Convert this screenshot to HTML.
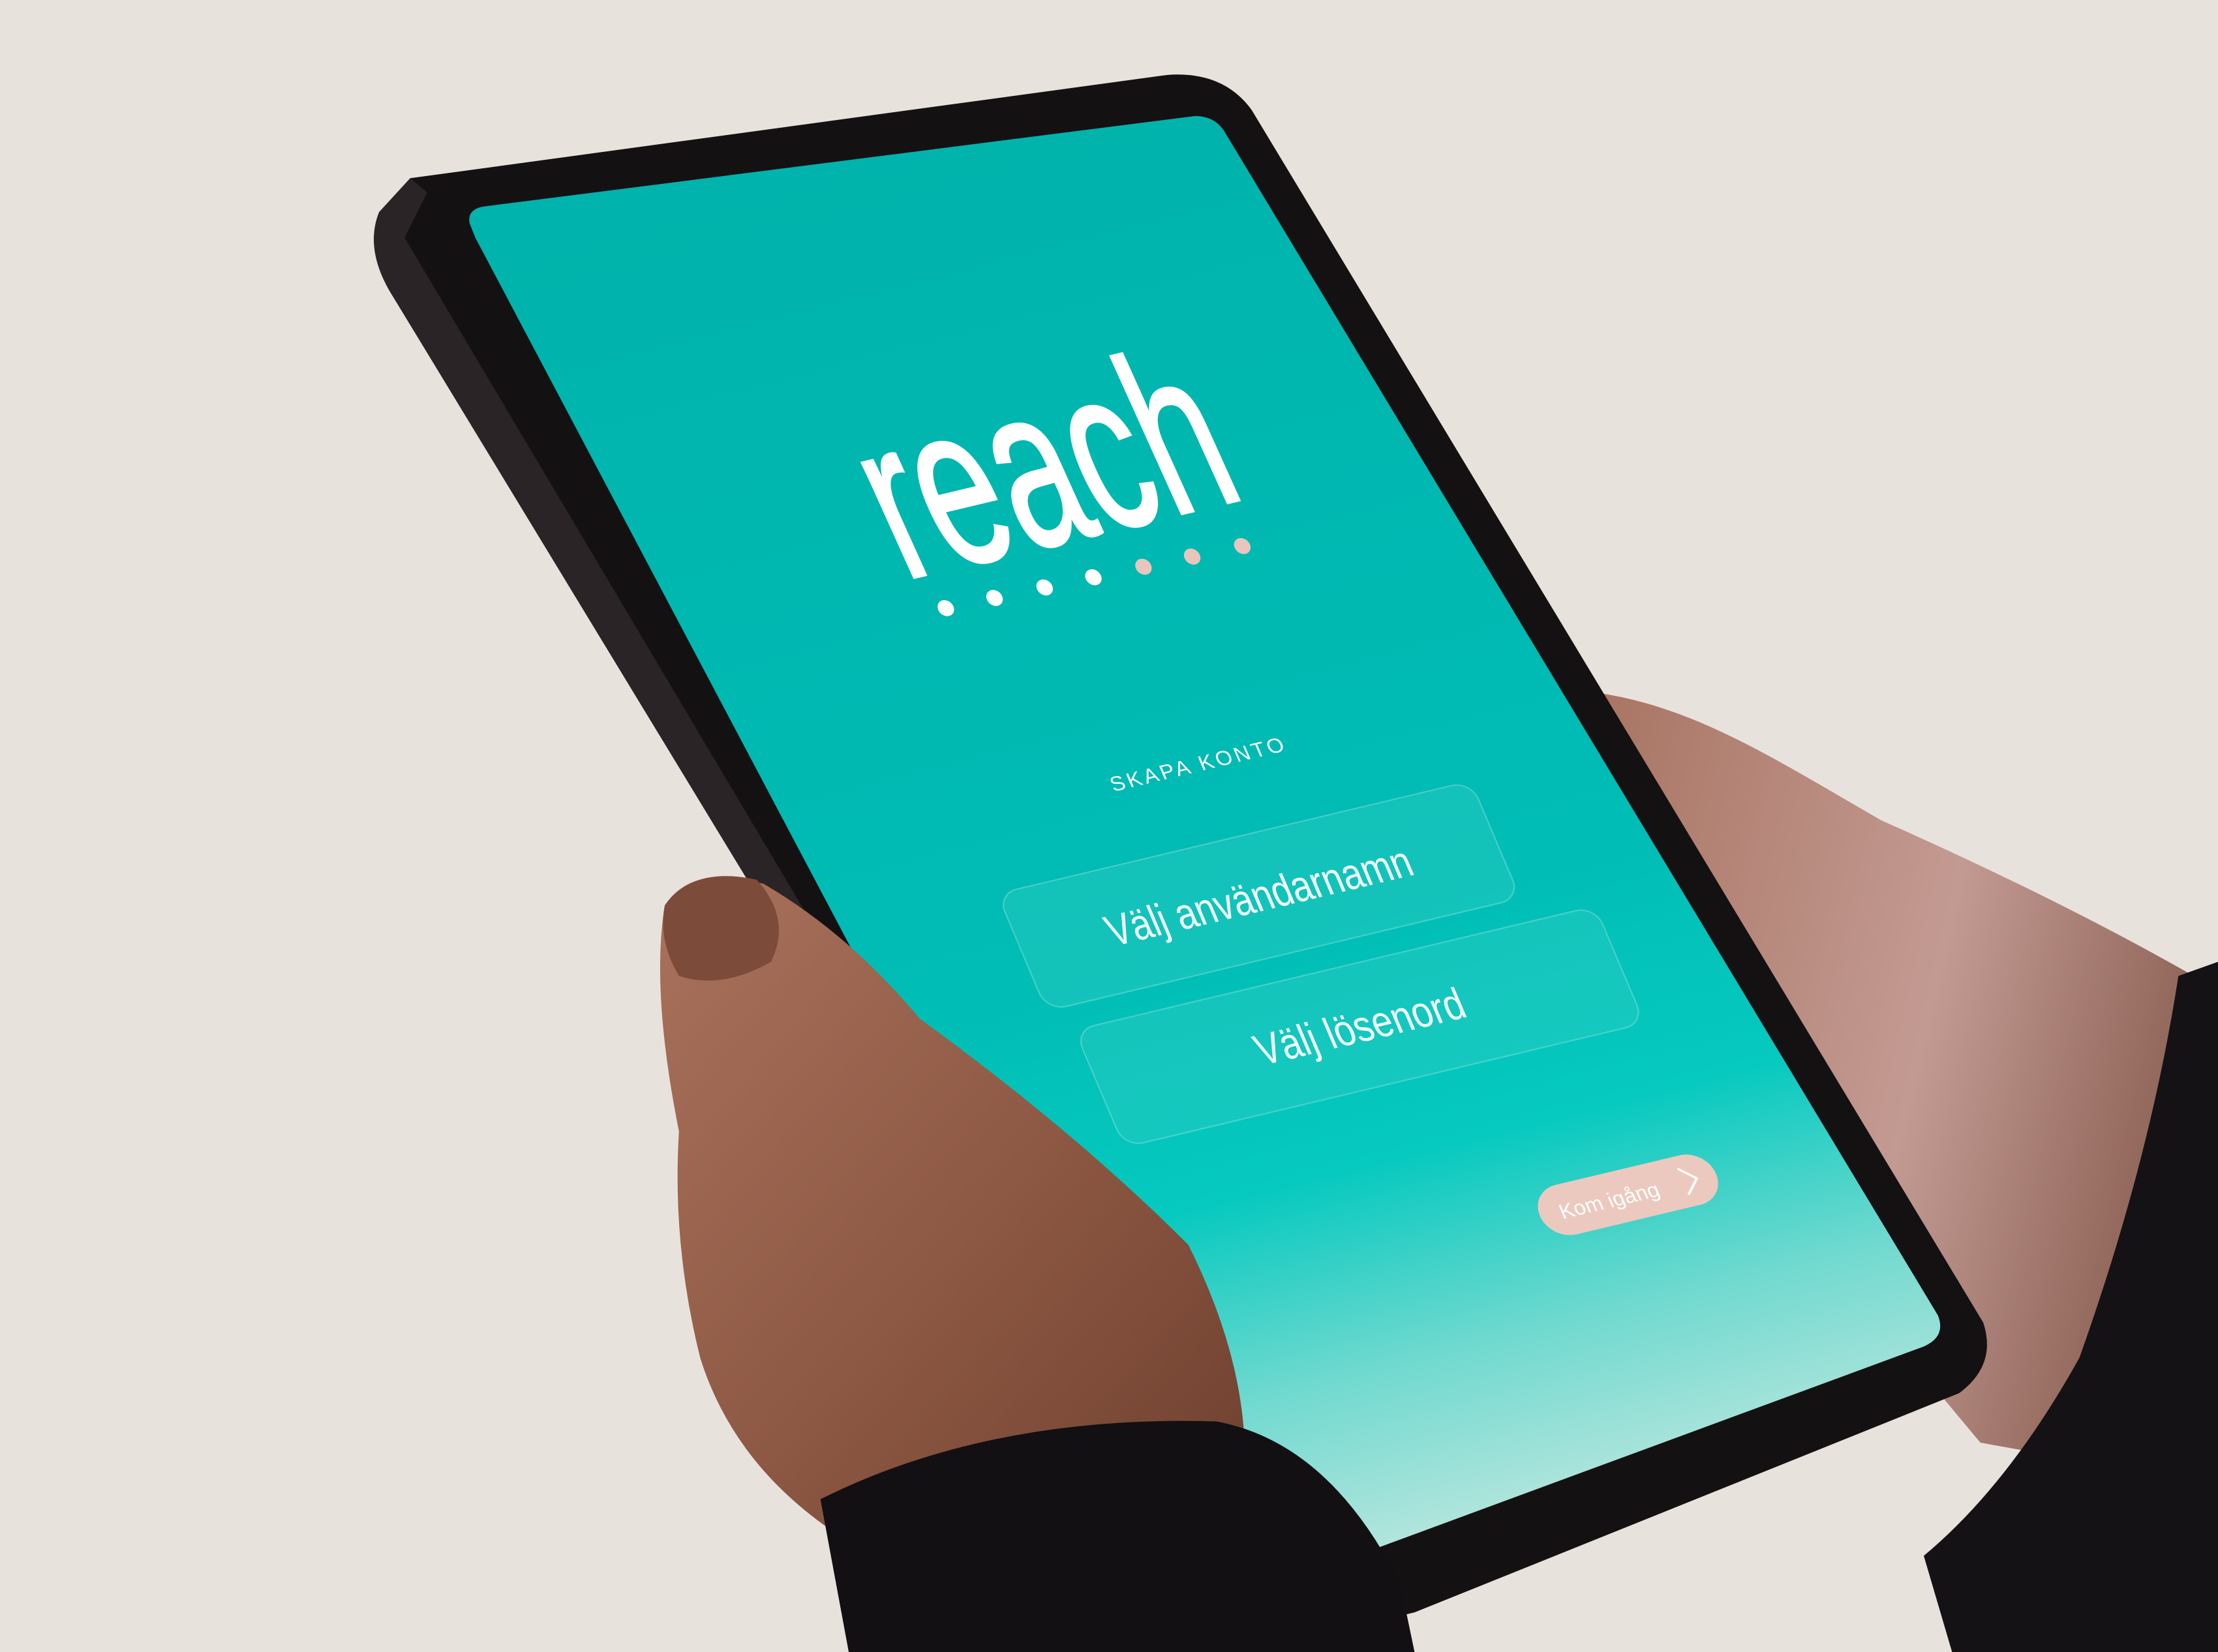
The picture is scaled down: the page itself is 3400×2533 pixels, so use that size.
<!DOCTYPE html>
<html><head><meta charset="utf-8"><style>html,body{margin:0;padding:0;background:#e8e2dd;overflow:hidden}svg{display:block}</style></head>
<body>
<svg width="3400" height="2533" viewBox="0 0 1568 1168" preserveAspectRatio="none" xmlns="http://www.w3.org/2000/svg">
<defs>
<linearGradient id="scr" x1="0.35" y1="0" x2="0.6" y2="1">
<stop offset="0" stop-color="#00b3ac"/>
<stop offset="0.55" stop-color="#00bdb5"/>
<stop offset="0.72" stop-color="#06c9bf"/>
<stop offset="0.85" stop-color="#6fd9cf"/>
<stop offset="1" stop-color="#c7e9e1"/>
</linearGradient>
<linearGradient id="skinR" x1="0" y1="0" x2="1" y2="0.3">
<stop offset="0" stop-color="#a97563"/>
<stop offset="0.6" stop-color="#c39a92"/>
<stop offset="1" stop-color="#8e6458"/>
</linearGradient>
<linearGradient id="skinL" x1="0" y1="0" x2="1" y2="1">
<stop offset="0" stop-color="#a9725d"/>
<stop offset="0.5" stop-color="#8f5a45"/>
<stop offset="1" stop-color="#6e3f2e"/>
</linearGradient>
</defs>
<rect width="1568" height="1168" fill="#e8e2dd"/>
<path d="M1130,490 C1200,500 1260,540 1330,580 C1420,620 1500,660 1568,700 L1568,1050 L1400,1020 L1300,900 Z" fill="url(#skinR)"/>
<path d="M290,126 L825,53 Q865,50 885,78 L1402,935 Q1412,965 1385,985 L1000,1140 L880,1168 L860,1168 L275,205 Q258,175 268,150 Z" fill="#141112"/>
<path d="M268,150 L290,126 L302,136 L286,168 L880,1168 L860,1168 L275,205 Q258,175 268,150Z" fill="#2a2426"/>
<path d="M332,158 Q330,148 342,146 L845,82 Q858,82 865,92 L1370,930 Q1376,945 1360,952 L850,1140 L336,168 Z" fill="url(#scr)"/>
<g transform="matrix(0.973,-0.232,0.42,0.93,745,632)" font-family="'Liberation Sans',sans-serif">
<text x="120" y="-240" fill="#fff" font-size="165" text-anchor="middle" textLength="250" lengthAdjust="spacingAndGlyphs" stroke="#fff" stroke-width="2">reach</text>
</g>
<g transform="matrix(0.973,-0.232,0.39,0.92,705,632)" font-family="'Liberation Sans',sans-serif">
<g>
<ellipse cx="46" cy="-208" rx="5.5" ry="6" fill="#fff"/>
<ellipse cx="81" cy="-207" rx="5.5" ry="6" fill="#fff"/>
<ellipse cx="117" cy="-206" rx="5.5" ry="6" fill="#fff"/>
<ellipse cx="152" cy="-205" rx="5.5" ry="6" fill="#fff"/>
<ellipse cx="188" cy="-204" rx="5.5" ry="6" fill="#e8c6bd"/>
<ellipse cx="223" cy="-203" rx="5.5" ry="6" fill="#e8c6bd"/>
<ellipse cx="259" cy="-202" rx="5.5" ry="6" fill="#e8c6bd"/>
</g>
<text x="169" y="-52" fill="#fff" font-size="15" text-anchor="middle" letter-spacing="2">SKAPA KONTO</text>
<rect x="0" y="0" width="344" height="90" rx="14" fill="#3fd0c6" fill-opacity="0.3" stroke="#7fe0d8" stroke-opacity="0.5"/>
<text x="172" y="56" fill="#f2fffd" font-size="32" text-anchor="middle" textLength="220" lengthAdjust="spacingAndGlyphs">Välj användarnamn</text>
<rect x="13" y="108" width="378" height="90" rx="14" fill="#3fd0c6" fill-opacity="0.3" stroke="#7fe0d8" stroke-opacity="0.5"/>
<text x="202" y="164" fill="#f2fffd" font-size="32" text-anchor="middle" textLength="150" lengthAdjust="spacingAndGlyphs">Välj lösenord</text>
<rect x="268" y="296" width="128" height="38" rx="19" fill="#ecc9be"/>
<text x="318" y="321" fill="#fff" font-size="15" text-anchor="middle">Kom igång</text>
<path d="M372,305 L382,315 L372,325" fill="none" stroke="#fff" stroke-width="1.6"/>
</g>
<path d="M470,640 Q490,610 540,625 Q600,660 650,720 Q760,800 840,880 Q880,960 880,1030 L600,1090 Q520,1040 495,960 Q475,880 480,800 Q460,700 470,640 Z" fill="url(#skinL)"/>
<path d="M470,640 Q490,612 535,622 Q560,650 545,680 Q510,700 480,690 Q465,665 470,640Z" fill="#7d4b3a"/>
<path d="M580,1060 Q700,1000 860,1005 Q940,1020 990,1120 L1000,1168 L600,1168 Z" fill="#121012"/>
<path d="M1540,690 L1568,680 L1568,1168 L1380,1168 L1360,1100 Q1420,1050 1470,960 Q1520,820 1540,690 Z" fill="#151215"/>
</svg>
</body></html>
